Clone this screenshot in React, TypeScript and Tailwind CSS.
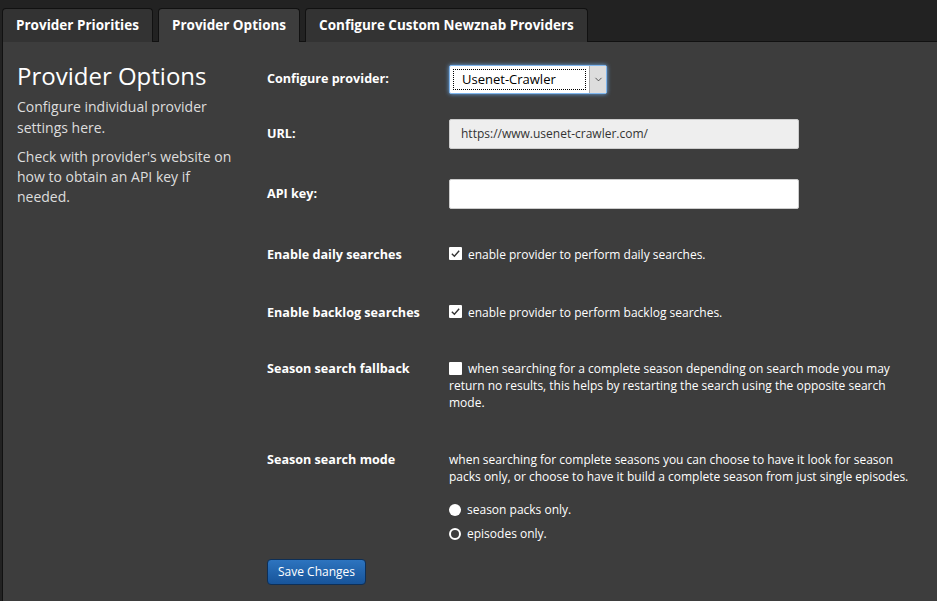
import { ChevronDown } from 'lucide-react';

const font = { fontFamily: '"Open Sans", "Noto Sans", sans-serif' };

const tabs = [
  { label: 'Provider Priorities', active: false },
  { label: 'Provider Options', active: true },
  { label: 'Configure Custom Newznab Providers', active: false },
];

const Check = ({ checked }: { checked: boolean }) => (
  <span className="mt-[1px] flex h-[13px] w-[13px] shrink-0 items-center justify-center rounded-[1px] bg-white">
    {checked && (
      <svg viewBox="0 0 12 12" className="h-[11px] w-[11px]">
        <path d="M2 6.2 4.8 9 10 3" fill="none" stroke="#333" strokeWidth="1.5" />
      </svg>
    )}
  </span>
);

const Radio = ({ selected }: { selected: boolean }) =>
  selected ? (
    <span className="h-[12px] w-[12px] shrink-0 rounded-full bg-white" />
  ) : (
    <span className="h-[12px] w-[12px] shrink-0 rounded-full border-[2.5px] border-white bg-[#3d3d3d]" />
  );

const Row = ({ label, className, children }: { label: string; className?: string; children: React.ReactNode }) => (
  <div className={`flex ${className ?? ''}`}>
    <div className="w-[182px] shrink-0 text-[12.6px] font-bold text-white">{label}</div>
    <div className="flex-1">{children}</div>
  </div>
);

export default function App() {
  return (
    <div className="h-[601px] w-[937px] overflow-hidden bg-[#222]" style={font}>
      {/* Tabs */}
      <div className="flex h-[41px] items-end gap-[5px] pl-[2px] pt-[7px]">
        {tabs.map((t) => (
          <div
            key={t.label}
            className={`relative -mb-px flex h-[34px] items-center rounded-t-[4px] border border-b-0 border-[#111] px-[13px] text-[13.5px] font-bold text-white ${
              t.active ? 'z-10 bg-[#3d3d3d]' : 'bg-[#333]'
            }`}
          >
            {t.label}
          </div>
        ))}
      </div>

      {/* Panel */}
      <div className="ml-[2px] flex h-[560px] border-l border-t border-[#111] bg-[#3d3d3d]">
        <div className="w-[264px] shrink-0 pl-[14px] pt-[18px] text-[14px] text-[#ddd]">
          <h1 className="text-[24px] leading-[32px] text-white">Provider Options</h1>
          <p className="mt-[4px] w-[222px] leading-[21px]">Configure individual provider settings here.</p>
          <p className="mt-[9px] w-[222px] leading-[20px]">
            Check with provider's website on how to obtain an API key if needed.
          </p>
        </div>

        <div className="flex-1 pr-[20px] pt-[23px]">
          <Row label="Configure provider:" className="items-center">
            <div className="flex h-[29px] w-[158px] rounded-[2px] border border-[#7fb6ee] bg-white shadow-[0_0_4px_#6aa8e8]">
              <div className="m-[3px] flex flex-1 items-center border border-dotted border-black pl-[8px] text-[13px] text-black">
                Usenet-Crawler
              </div>
              <div className="flex w-[17px] items-center justify-center border-l border-[#aaa] bg-[#ddd]">
                <ChevronDown size={11} strokeWidth={1.75} color="#333" />
              </div>
            </div>
          </Row>

          <Row label="URL:" className="mt-[25px] items-center">
            <div className="flex h-[30px] w-[350px] items-center rounded-[2px] border border-[#ccc] bg-[#eee] pl-[11px] text-[12px] text-[#333]">
              https://www.usenet-crawler.com/
            </div>
          </Row>

          <Row label="API key:" className="mt-[30px] items-center">
            <div className="h-[30px] w-[350px] rounded-[2px] border border-[#ccc] bg-white" />
          </Row>

          <Row label="Enable daily searches" className="mt-[37px]">
            <label className="flex items-start gap-[6px] text-[12px] text-white">
              <Check checked />
              enable provider to perform daily searches.
            </label>
          </Row>

          <Row label="Enable backlog searches" className="mt-[39px]">
            <label className="flex items-start gap-[6px] text-[12px] text-white">
              <Check checked />
              enable provider to perform backlog searches.
            </label>
          </Row>

          <Row label="Season search fallback" className="mt-[37px]">
            <p className="text-[12px] leading-[17px] text-white">
              <span className="mr-[6px] inline-block h-[13px] w-[13px] translate-y-[2px] rounded-[1px] bg-white" />
              when searching for a complete season depending on search mode you may return no results, this helps by
              restarting the search using the opposite search mode.
            </p>
          </Row>

          <Row label="Season search mode" className="mt-[40px]">
            <p className="text-[12px] leading-[17px] text-white">
              when searching for complete seasons you can choose to have it look for season packs only, or choose to
              have it build a complete season from just single episodes.
            </p>
            <div className="mt-[16px] flex flex-col gap-[6px] text-[12px] text-white">
              <label className="flex items-center gap-[6px]">
                <Radio selected />
                season packs only.
              </label>
              <label className="flex items-center gap-[6px]">
                <Radio selected={false} />
                episodes only.
              </label>
            </div>
          </Row>

          <button className="mt-[16px] h-[26px] rounded-[4px] border border-[#0d2f57] bg-gradient-to-b from-[#2d74bf] to-[#17549a] px-[10px] text-[12px] text-white">
            Save Changes
          </button>
        </div>
      </div>
    </div>
  );
}
